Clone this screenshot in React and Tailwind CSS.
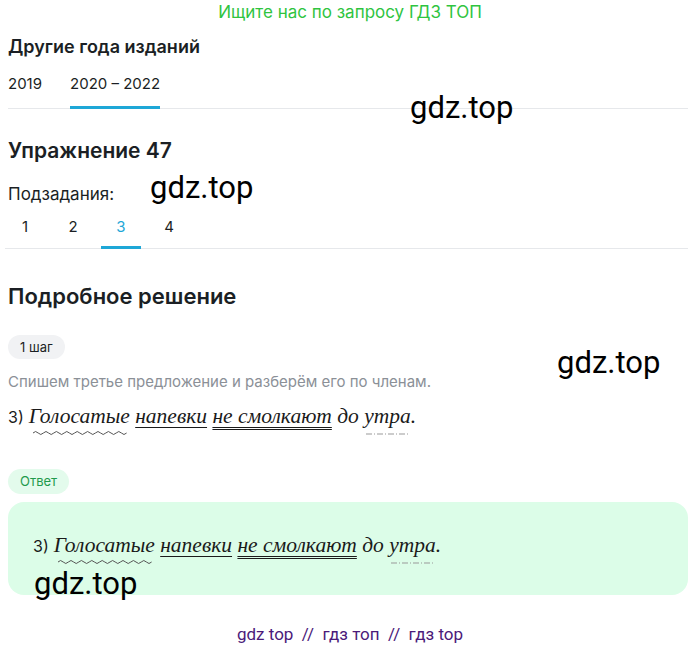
import React from "react";

const Mark = ({ className }) => (
  <div
    className={`absolute text-[31px] leading-none text-black pointer-events-none ${className}`}
    style={{ fontFamily: "Roboto, sans-serif" }}
  >
    gdz.top
  </div>
);

const Sentence = () => (
  <div className="flex items-baseline text-[#1a1a1a]">
    <span className="text-[16px] mr-[5px]" style={{ fontFamily: "Inter, sans-serif" }}>3)</span>
    <span className="italic text-[21.5px] leading-[28px]" style={{ fontFamily: "'Liberation Serif', serif" }}>
      <span className="relative">
        Голосатые
        <svg className="absolute left-[4px] top-[26px]" width="94" height="6" viewBox="0 0 94 6">
          <path
            d="M0 3 q2.6 -3 5.2 0 t5.2 0 t5.2 0 t5.2 0 t5.2 0 t5.2 0 t5.2 0 t5.2 0 t5.2 0 t5.2 0 t5.2 0 t5.2 0 t5.2 0 t5.2 0 t5.2 0 t5.2 0 t5.2 0 t5.2 0"
            fill="none"
            stroke="#555"
            strokeWidth="1"
          />
        </svg>
      </span>{" "}
      <span className="underline decoration-1 underline-offset-[4px]">напевки</span>{" "}
      <span className="underline decoration-double decoration-1 underline-offset-[4px]">не смолкают</span>{" "}
      до{" "}
      <span className="relative">
        утра
        <svg className="absolute left-[2px] top-[28px]" width="44" height="4" viewBox="0 0 44 4">
          <line x1="0" y1="2" x2="44" y2="2" stroke="#999" strokeWidth="1" strokeDasharray="6 2 1 2" />
        </svg>
      </span>
      .
    </span>
  </div>
);

export default function App() {
  return (
    <div className="relative w-[700px] h-[650px] bg-white text-[#1b1f24]" style={{ fontFamily: "Inter, sans-serif" }}>
      <div className="text-center text-[17px] leading-[24px] text-[#2fc43f]">Ищите нас по запросу ГДЗ ТОП</div>

      <div className="px-2">
        <h2 className="mt-[11px] text-[18px] leading-[24px] font-semibold">Другие года изданий</h2>
        <div className="mt-[14px] flex border-b border-[#e6e8eb] mr-[4px] text-[15px]">
          <div className="pb-[12px]">2019</div>
          <div className="ml-[28px] pb-[10px] border-b-[3px] border-[#1ea7d7] -mb-px">2020 – 2022</div>
        </div>

        <h2 className="mt-[29px] text-[21px] leading-[26px] font-semibold">Упражнение 47</h2>
        <div className="mt-[19px] text-[17px] leading-[22px]">Подзадания:</div>
        <div className="mt-[11px] -ml-[3px] flex border-b border-[#e6e8eb] mr-[4px] text-[15px]">
          {["1", "2", "3", "4"].map((n) => (
            <div
              key={n}
              className={`w-[40px] mr-[8px] text-center pb-[7px] ${
                n === "3" ? "text-[#1ea7d7] border-b-[3px] border-[#1ea7d7] -mb-px" : "pb-[10px]"
              }`}
            >
              {n}
            </div>
          ))}
        </div>

        <h2 className="mt-[33px] text-[22px] leading-[28px] font-semibold">Подробное решение</h2>
        <div className="mt-[25px] inline-block rounded-full bg-[#f1f2f4] px-[12px] py-[5px] text-[13px] leading-[14px]">1 шаг</div>
        <div className="mt-[13px] text-[15px] leading-[20px] text-[#8b9097]">
          Спишем третье предложение и разберём его по членам.
        </div>
        <div className="mt-[10px] pb-[10px]">
          <Sentence />
        </div>

        <div className="mt-[29px] inline-block rounded-full bg-[#e3fbec] px-[12px] py-[5px] text-[13px] leading-[15px] text-[#1f9a4d]">
          Ответ
        </div>
        <div className="mt-[8px] mr-[4px] h-[93px] rounded-[16px] bg-[#dcfde8] pl-[25px] pt-[29px]">
          <Sentence />
        </div>
      </div>

      <div className="mt-[27px] text-center text-[17px] text-[#4b1a7a]" style={{ fontFamily: "Roboto, sans-serif" }}>
        gdz top&nbsp; //&nbsp; гдз топ&nbsp; //&nbsp; гдз top
      </div>

      <Mark className="left-[410px] top-[92px]" />
      <Mark className="left-[150px] top-[172px]" />
      <Mark className="left-[557px] top-[347px]" />
      <Mark className="left-[34px] top-[568px]" />
    </div>
  );
}
